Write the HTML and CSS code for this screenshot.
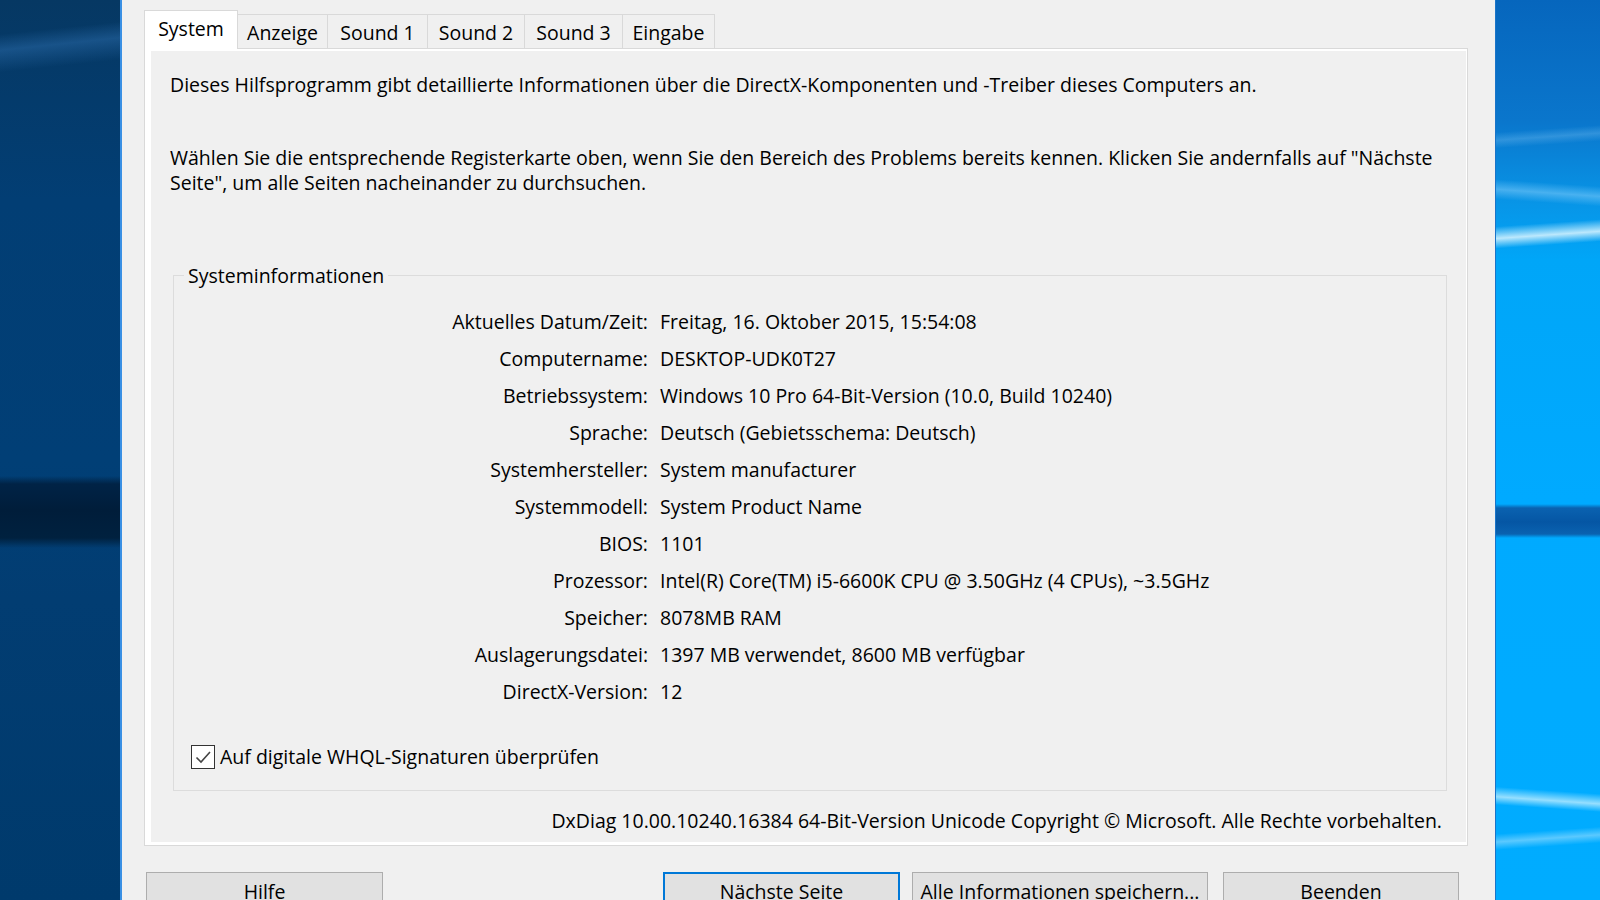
FILE: index.html
```html
<!DOCTYPE html>
<html lang="de">
<head>
    <meta charset="UTF-8">
    <title>DirectX-Diagnoseprogramm</title>
    <link rel="stylesheet" href="styles.css">
</head>
<body>
    <div class="screen">
        <div class="wall wall-left"></div>
        <div class="dialog">
            <div class="tabs">
                <div class="tab tab-system active">System</div>
                <div class="tab tab-anzeige">Anzeige</div>
                <div class="tab tab-s1">Sound 1</div>
                <div class="tab tab-s2">Sound 2</div>
                <div class="tab tab-s3">Sound 3</div>
                <div class="tab tab-eingabe">Eingabe</div>
            </div>
            <div class="panel">
                <div class="page">
                    <p class="intro">Dieses Hilfsprogramm gibt detaillierte Informationen über die DirectX-Komponenten und -Treiber dieses Computers an.</p>
                    <p class="intro second">Wählen Sie die entsprechende Registerkarte oben, wenn Sie den Bereich des Problems bereits kennen. Klicken Sie andernfalls auf "Nächste<br>Seite", um alle Seiten nacheinander zu durchsuchen.</p>
                    <fieldset class="group">
                        <legend>Systeminformationen</legend>
                        <div class="info">
                            <span class="label">Aktuelles Datum/Zeit:</span><span class="value">Freitag, 16. Oktober 2015, 15:54:08</span>
                            <span class="label">Computername:</span><span class="value">DESKTOP-UDK0T27</span>
                            <span class="label">Betriebssystem:</span><span class="value">Windows 10 Pro 64-Bit-Version (10.0, Build 10240)</span>
                            <span class="label">Sprache:</span><span class="value">Deutsch (Gebietsschema: Deutsch)</span>
                            <span class="label">Systemhersteller:</span><span class="value">System manufacturer</span>
                            <span class="label">Systemmodell:</span><span class="value">System Product Name</span>
                            <span class="label">BIOS:</span><span class="value">1101</span>
                            <span class="label">Prozessor:</span><span class="value">Intel(R) Core(TM) i5-6600K CPU @ 3.50GHz (4 CPUs), ~3.5GHz</span>
                            <span class="label">Speicher:</span><span class="value">8078MB RAM</span>
                            <span class="label">Auslagerungsdatei:</span><span class="value">1397 MB verwendet, 8600 MB verfügbar</span>
                            <span class="label">DirectX-Version:</span><span class="value">12</span>
                        </div>
                        <div class="check">
                            <span class="box">
                                <svg width="22" height="22" viewBox="0 0 22 22"><path d="M4.5 11.5 L9 16 L18 6" fill="none" stroke="#444" stroke-width="1.6"/></svg>
                            </span>
                            Auf digitale WHQL-Signaturen überprüfen
                        </div>
                    </fieldset>
                    <div class="copyright">DxDiag 10.00.10240.16384 64-Bit-Version Unicode Copyright © Microsoft. Alle Rechte vorbehalten.</div>
                </div>
            </div>
            <div class="buttons">
                <div class="btn btn-help">Hilfe</div>
                <div class="btn btn-next default">Nächste Seite</div>
                <div class="btn btn-save">Alle Informationen speichern...</div>
                <div class="btn btn-exit">Beenden</div>
            </div>
        </div>
        <div class="wall wall-right"></div>
    </div>
</body>
</html>
```
FILE: styles.css
```css
* {
    margin: 0;
    padding: 0;
    box-sizing: border-box;
}
body {
    width: 1600px;
    height: 900px;
    overflow: hidden;
    font-family: "Open Sans", "Noto Sans", sans-serif;
    font-size: 19.5px;
    color: #000;
}
.screen {
    display: flex;
    height: 900px;
}

/* desktop behind the window */
.wall {
    height: 900px;
}
.wall-left {
    width: 120px;
    background:
        linear-gradient(to bottom, transparent 476px, #002346 484px, #001d3a 510px, #00213f 538px, transparent 548px),
        linear-gradient(174deg, transparent 34px, rgba(60, 130, 200, 0.35) 50px, transparent 72px),
        linear-gradient(to bottom, #063863 0, #023e74 200px, #013f76 460px, #023d72 600px, #003a6c 900px);
}
.wall-right {
    width: 105px;
    border-left: 1px solid #1a74c8;
    background:
        linear-gradient(to bottom, transparent 504px, #0a62b0 508px, #0556a4 522px, #0a62b0 534px, transparent 538px),
        linear-gradient(176deg, transparent 226px, rgba(220, 245, 255, 0.85) 238px, transparent 248px),
        linear-gradient(184deg, transparent 186px, rgba(150, 215, 255, 0.45) 196px, transparent 206px),
        linear-gradient(176deg, transparent 132px, rgba(120, 190, 240, 0.35) 140px, transparent 148px),
        linear-gradient(184deg, transparent 792px, rgba(200, 240, 255, 0.75) 802px, transparent 810px),
        linear-gradient(176deg, transparent 832px, rgba(180, 230, 255, 0.5) 840px, transparent 848px),
        linear-gradient(to bottom, #0666bd 0, #0a76cc 120px, #0894e6 200px, #00a6f8 260px, #00aaff 500px, #00acff 900px);
}

/* dialog window */
.dialog {
    width: 1375px;
    height: 900px;
    background-color: #f0f0f0;
    border-left: 2px solid #3a90e4;
    padding: 10px 27px 0 22px;
}
.tabs {
    display: flex;
    align-items: flex-end;
    height: 38px;
}
.tab {
    height: 34px;
    border: 1px solid #d9d9d9;
    border-bottom: none;
    margin-left: -1px;
    background-color: #f0f0f0;
    display: flex;
    align-items: center;
    justify-content: center;
    padding-top: 2px;
}
.tab.active {
    position: relative;
    z-index: 2;
    height: 39px;
    margin-bottom: -1px;
    margin-left: 0;
    background-color: #fff;
    padding-top: 0;
    padding-bottom: 4px;
}
.tab-system { width: 94px; }
.tab-anzeige { width: 91px; }
.tab-s1 { width: 101px; }
.tab-s2 { width: 98px; }
.tab-s3 { width: 99px; }
.tab-eingabe { width: 93px; }

.panel {
    border: 1px solid #d9d9d9;
    background-color: #fff;
    padding: 2px 1px 3px 6px;
}
.page {
    background-color: #f0f0f0;
    padding: 21px 24px 9px 19px;
}
.intro {
    line-height: 25px;
}
.intro.second {
    margin-top: 48px;
}

/* group box */
.group {
    margin: 68px -5px 0 3px;
    border: 1px solid #dcdcdc;
    padding: 15px 0 15px 0;
}
.group legend {
    margin-left: 10px;
    padding: 0 4px;
    line-height: 25px;
}
.info {
    display: grid;
    grid-template-columns: 474px 1fr;
    column-gap: 12px;
    grid-auto-rows: 37px;
    align-items: center;
}
.label {
    text-align: right;
}
.check {
    display: flex;
    align-items: center;
    height: 37px;
    margin-top: 28px;
    margin-left: 17px;
}
.box {
    width: 24px;
    height: 24px;
    border: 1px solid #333;
    background-color: #fff;
    margin-right: 5px;
    display: flex;
    align-items: center;
    justify-content: center;
}
.copyright {
    margin-top: 17px;
    line-height: 25px;
    text-align: right;
}

/* buttons */
.buttons {
    display: flex;
    margin-top: 26px;
    padding: 0 9px 0 2px;
}
.btn {
    height: 38px;
    border: 1px solid #adadad;
    background-color: #e1e1e1;
    display: flex;
    align-items: center;
    justify-content: center;
    white-space: nowrap;
}
.btn-help { width: 237px; }
.btn-next {
    width: 237px;
    margin-left: auto;
}
.btn-save {
    width: 296px;
    margin-left: 12px;
}
.btn-exit {
    width: 236px;
    margin-left: 15px;
}
.default {
    border: 2px solid #0078d7;
}
```
